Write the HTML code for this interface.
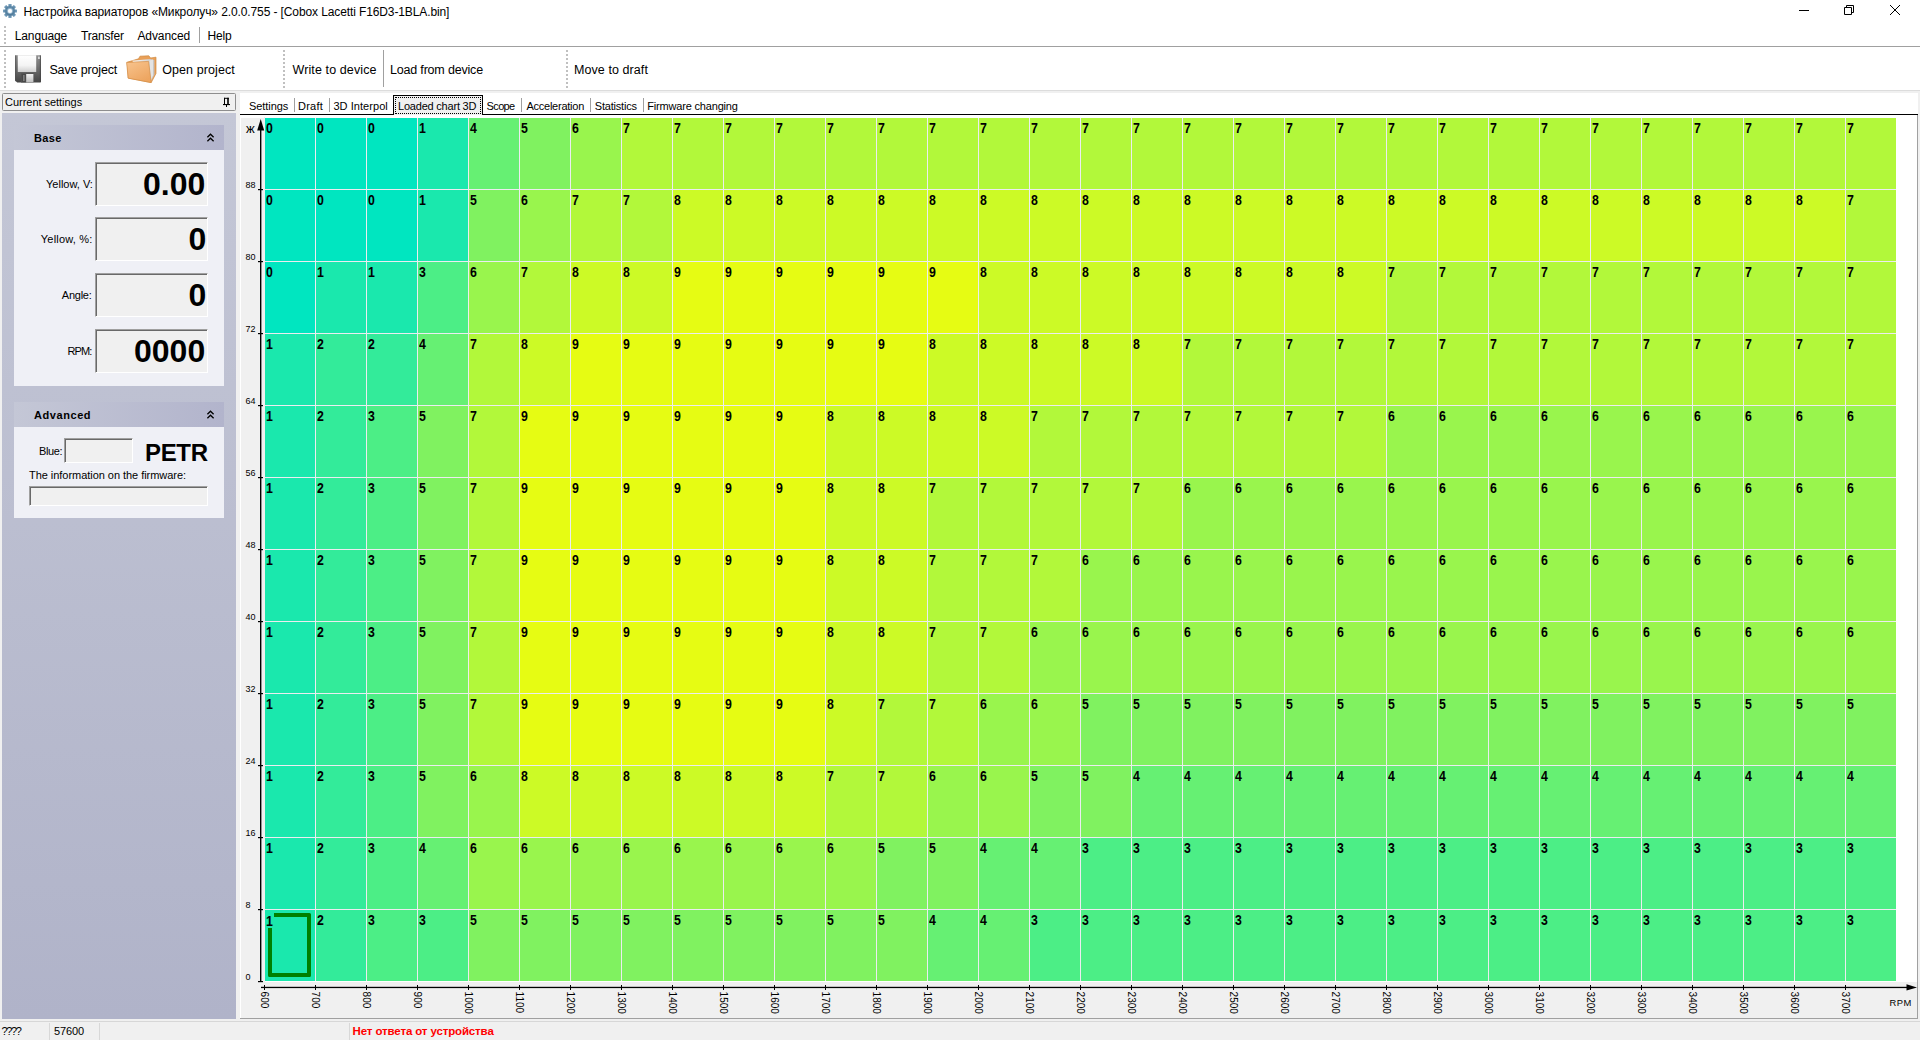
<!DOCTYPE html>
<html lang="ru"><head><meta charset="utf-8"><title>Настройка вариаторов «Микролуч»</title>
<style>
html,body{margin:0;padding:0}
body{width:1920px;height:1040px;overflow:hidden;position:relative;background:#f0f0f0;font-family:"Liberation Sans","DejaVu Sans",sans-serif;font-size:11px;color:#000}
.a{position:absolute}
.t{position:absolute;white-space:nowrap;line-height:1;transform-origin:0 0}
#title{left:0;top:0;width:1920px;height:23px;background:#fff}
#menu{left:0;top:23px;width:1920px;height:23px;background:#fff}
#tool{left:0;top:47px;width:1920px;height:43px;background:#fff}
.grip{position:absolute;width:2px;background:repeating-linear-gradient(to bottom,#c0c0c0 0,#c0c0c0 2px,transparent 2px,transparent 4px)}
.sep{position:absolute;width:1px;background:#a0a0a0}
.ui{font-size:12px}.tbf{font-size:12.5px}
.tab{font-size:11px}
#left{left:2px;top:113px;width:234px;height:906px;background:linear-gradient(to bottom,#c4c7d6,#b0b3c9)}
.hdr{position:absolute;width:210px;height:25px;background:linear-gradient(to right,#c4c7d6,#b2b4cc)}
.pane{position:absolute;width:210px;background:#eff0f6}
.box{position:absolute;box-sizing:border-box;background:#f0f0f0;border:1px solid;border-color:#a0a0a0 #fff #fff #a0a0a0;box-shadow:inset 1px 1px 0 #696969}
.big{position:absolute;font-weight:bold;white-space:nowrap;line-height:1;text-align:right}
.lbl{position:absolute;white-space:nowrap;line-height:1;font-size:11px;text-align:right}
#chart{left:240px;top:116px;width:1678px;height:903px}
.c{position:absolute;width:51px;height:72px}
.n{position:absolute;font-weight:bold;font-size:14px;line-height:1;transform:scaleX(.88);transform-origin:0 0;white-space:nowrap}
#status{left:0;top:1021px;width:1920px;height:19px;background:#f0f0f0}
.v0{background:#00e6c0}
.v1{background:#1ae8ad}
.v2{background:#33eb9a}
.v3{background:#4cee86}
.v4{background:#66f073}
.v5{background:#80f260}
.v6{background:#99f54d}
.v7{background:#b2f83a}
.v8{background:#ccfa26}
.v9{background:#e6fc13}
</style></head><body>
<div id="title" class="a"><svg class="a" style="left:3px;top:4px" width="14" height="14" viewBox="0 0 14 14"><defs><linearGradient id="gg" x1="0" y1="0" x2="0" y2="1"><stop offset="0" stop-color="#7aa3c0"/><stop offset="1" stop-color="#4d7898"/></linearGradient></defs><g fill="url(#gg)"><circle cx="7" cy="7" r="5.1"/><rect x="5.4" y="0" width="3.2" height="3.4" rx=".5" transform="rotate(0 7 7)"/><rect x="5.4" y="0" width="3.2" height="3.4" rx=".5" transform="rotate(45 7 7)"/><rect x="5.4" y="0" width="3.2" height="3.4" rx=".5" transform="rotate(90 7 7)"/><rect x="5.4" y="0" width="3.2" height="3.4" rx=".5" transform="rotate(135 7 7)"/><rect x="5.4" y="0" width="3.2" height="3.4" rx=".5" transform="rotate(180 7 7)"/><rect x="5.4" y="0" width="3.2" height="3.4" rx=".5" transform="rotate(225 7 7)"/><rect x="5.4" y="0" width="3.2" height="3.4" rx=".5" transform="rotate(270 7 7)"/><rect x="5.4" y="0" width="3.2" height="3.4" rx=".5" transform="rotate(315 7 7)"/></g><circle cx="7" cy="7" r="2.7" fill="#a9c4d8"/><circle cx="7" cy="7" r="2" fill="#fff"/></svg><span class="t ui" id="ttl" style="left:23.50px;top:6px;letter-spacing:-0.110px;">Настройка вариаторов «Микролуч» 2.0.0.755 - [Cobox Lacetti F16D3-1BLA.bin]</span><svg class="a" style="left:1790px;top:0" width="130" height="23" viewBox="0 0 130 23" fill="none" stroke="#000" stroke-width="1"><path d="M9 10.5H19"/><path d="M54.5 7.5h7v7h-7zM56.5 7.5v-2h7v7h-2"/><path d="M100 5l10 10M110 5l-10 10"/></svg></div>
<div id="menu" class="a"><div class="grip" style="left:4px;top:3px;height:20px"></div><span class="t ui" id="m0" style="left:14.80px;top:7px;letter-spacing:-0.143px;">Language</span><span class="t ui" id="m1" style="left:81.00px;top:7px;letter-spacing:-0.171px;">Transfer</span><span class="t ui" id="m2" style="left:137.40px;top:7px;letter-spacing:-0.086px;">Advanced</span><span class="t ui" id="m3" style="left:207.60px;top:7px;letter-spacing:-0.200px;">Help</span><div class="sep" style="left:199px;top:4px;height:16px"></div></div><div class="a" style="left:0;top:46px;width:1920px;height:1px;background:#a0a0a0"></div>
<div id="tool" class="a"><div class="grip" style="left:4px;top:3px;height:38px"></div><svg class="a" style="left:15px;top:8px" width="26" height="28" viewBox="0 0 26 28"><defs><linearGradient id="fg" x1="0" y1="0" x2="0" y2="1"><stop offset="0" stop-color="#909090"/><stop offset=".55" stop-color="#686868"/><stop offset="1" stop-color="#444"/></linearGradient><linearGradient id="fl" x1="0" y1="0" x2="0" y2="1"><stop offset="0" stop-color="#fff"/><stop offset=".6" stop-color="#f4f4f4"/><stop offset="1" stop-color="#cfcfcf"/></linearGradient><linearGradient id="fs" x1="0" y1="0" x2="0" y2="1"><stop offset="0" stop-color="#f2f2f2"/><stop offset="1" stop-color="#bdbdbd"/></linearGradient></defs><path d="M1 .2H25a1 1 0 0 1 1 1V26.5a1 1 0 0 1-1 1H2.2L0 25.5V1.2a1 1 0 0 1 1-1Z" fill="url(#fg)"/><rect x="0" y=".2" width="1.2" height="26" fill="#505050" opacity=".6"/><rect x="24.8" y=".2" width="1.2" height="27" fill="#404040" opacity=".6"/><rect x="2.8" y=".2" width="18.4" height="16.8" fill="url(#fl)"/><rect x="23" y="1.6" width="1.8" height="2.4" fill="#d8d8d8"/><rect x="6" y="18.4" width="12.4" height="9.1" fill="#505050"/><rect x="7.6" y="19.2" width="2.6" height="7.6" fill="#3a3a3a"/><rect x="8.3" y="19.8" width="1.2" height="6.4" fill="#9a9a9a"/><rect x="11.2" y="19" width="7.2" height="8.5" fill="url(#fs)"/></svg><span class="t tbf" id="tb0" style="left:49.40px;top:17px;letter-spacing:-0.145px;">Save project</span><svg class="a" style="left:126px;top:8px" width="31" height="28" viewBox="0 0 31 28"><defs><linearGradient id="fo" x1="0" y1="0" x2=".6" y2="1"><stop offset="0" stop-color="#f8c48e"/><stop offset="1" stop-color="#eda560"/></linearGradient><linearGradient id="fp" x1="0" y1="0" x2="1" y2="0"><stop offset="0" stop-color="#fff"/><stop offset="1" stop-color="#c4c4c4"/></linearGradient></defs><path d="M1.2 7.2L12.5 3.8L14 1.2L22.8 .8L24.6 3L30 2.2V18.5L25.2 27.6L2.2 23Z" fill="#e9a058" stroke="#cf8a42" stroke-width=".7" stroke-linejoin="round"/><path d="M6 5.8L24.2 4L28.4 5V19.5L25 26Z" fill="url(#fp)"/><path d="M23.4 5.5L27 4.6V20.5L24.8 25Z" fill="#e4e4e4"/><path d="M.6 7.4L22.6 6.4L25.2 27.6L2.2 23.2Z" fill="url(#fo)" stroke="#d58f47" stroke-width=".7" stroke-linejoin="round"/></svg><span class="t tbf" id="tb1" style="left:162.20px;top:17px;letter-spacing:0.091px;">Open project</span><div class="grip" style="left:283px;top:3px;height:38px"></div><span class="t tbf" id="tb2" style="left:292.50px;top:17px;letter-spacing:0.107px;">Write to device</span><div class="sep" style="left:383px;top:3px;height:37px"></div><span class="t tbf" id="tb3" style="left:390.00px;top:17px;letter-spacing:-0.187px;">Load from device</span><div class="grip" style="left:566px;top:3px;height:38px"></div><span class="t tbf" id="tb4" style="left:574.00px;top:17px;letter-spacing:0.075px;">Move to draft</span></div><div class="a" style="left:0;top:90px;width:1920px;height:1px;background:#dcdcdc"></div>
<div class="a" style="left:2px;top:93px;width:234px;height:18px;box-sizing:border-box;background:#f0f0f0;border:1px solid #8e8e8e;border-radius:1.5px"></div><span class="t " id="cs" style="left:5.10px;top:97px;letter-spacing:-0.040px;">Current settings</span><svg class="a" style="left:223px;top:97px" width="8" height="11" viewBox="0 0 8 11" fill="#000"><rect x="1" y=".8" width="1" height="6.4"/><rect x="1" y=".8" width="4.8" height="1"/><rect x="4.2" y=".8" width="1.6" height="6.4"/><rect x="0" y="7" width="7" height="1.1"/><rect x="3" y="8" width="1" height="2"/></svg>
<div id="left" class="a"></div><div class="hdr" style="left:14px;top:125px"></div><svg class="a" style="left:206px;top:133px" width="9" height="9" viewBox="0 0 9 9" fill="none" stroke="#000" stroke-width="1.3"><path d="M1.4 4.2L4.5 1.2L7.6 4.2M1.4 8.2L4.5 5.2L7.6 8.2"/></svg><span class="t " id="h0" style="left:34.00px;top:133px;letter-spacing:0.333px;font-weight:bold">Base</span><div class="pane" style="left:14px;top:150px;height:236px"></div><span class="t " id="l0" style="left:46.00px;top:179px;letter-spacing:0.000px;">Yellow, V:</span><div class="box" style="left:95px;top:162px;width:113px;height:44px"></div><span class="t " id="b0" style="left:143.00px;top:168px;letter-spacing:0.000px;font-weight:bold;font-size:32px">0.00</span><span class="t " id="l1" style="left:40.80px;top:234px;letter-spacing:0.200px;">Yellow, %:</span><div class="box" style="left:95px;top:217px;width:113px;height:44px"></div><span class="t " id="b1" style="left:188.60px;top:223px;letter-spacing:0.000px;font-weight:bold;font-size:32px">0</span><span class="t " id="l2" style="left:61.80px;top:290px;letter-spacing:-0.240px;">Angle:</span><div class="box" style="left:95px;top:273px;width:113px;height:44px"></div><span class="t " id="b2" style="left:188.60px;top:279px;letter-spacing:0.000px;font-weight:bold;font-size:32px">0</span><span class="t " id="l3" style="left:67.60px;top:346px;letter-spacing:-0.933px;">RPM:</span><div class="box" style="left:95px;top:329px;width:113px;height:44px"></div><span class="t " id="b3" style="left:134.00px;top:335px;letter-spacing:0.000px;font-weight:bold;font-size:32px">0000</span><div class="hdr" style="left:14px;top:402px"></div><svg class="a" style="left:206px;top:410px" width="9" height="9" viewBox="0 0 9 9" fill="none" stroke="#000" stroke-width="1.3"><path d="M1.4 4.2L4.5 1.2L7.6 4.2M1.4 8.2L4.5 5.2L7.6 8.2"/></svg><span class="t " id="h1" style="left:34.00px;top:410px;letter-spacing:0.571px;font-weight:bold">Advanced</span><div class="pane" style="left:14px;top:427px;height:91px"></div><span class="t " id="blue" style="left:39.00px;top:446px;letter-spacing:-0.400px;">Blue:</span><div class="box" style="left:64px;top:438px;width:69px;height:25px"></div><span class="t " id="petr" style="left:145.00px;top:441px;letter-spacing:-0.333px;font-weight:bold;font-size:24px">PETR</span><span class="t " id="fw" style="left:29.00px;top:470px;letter-spacing:-0.042px;">The information on the firmware:</span><div class="box" style="left:29px;top:486px;width:179px;height:20px"></div>
<div class="a" style="left:240px;top:93px;width:1678px;height:21px;background:#fff"></div><div class="a" style="left:240px;top:114px;width:1678px;height:1px;background:#000"></div><div class="a" style="left:393px;top:95px;width:90px;height:20px;box-sizing:border-box;background:#f0f0f0;border:1px solid #000;border-bottom:none"></div><div class="a" style="left:394px;top:114px;width:88px;height:4px;background:#f0f0f0"></div><div class="a" style="left:395px;top:97px;width:86px;height:17px;box-sizing:border-box;border:1px dotted #000"></div><span class="t tab" id="tt0" style="left:249.00px;top:101px;letter-spacing:-0.057px;">Settings</span><span class="t tab" id="tt1" style="left:298.00px;top:101px;letter-spacing:0.250px;">Draft</span><span class="t tab" id="tt2" style="left:333.40px;top:101px;letter-spacing:0.060px;">3D Interpol</span><span class="t tab" id="tt3" style="left:398.00px;top:101px;letter-spacing:-0.207px;">Loaded chart 3D</span><span class="t tab" id="tt4" style="left:486.60px;top:101px;letter-spacing:-0.650px;">Scope</span><span class="t tab" id="tt5" style="left:526.40px;top:101px;letter-spacing:-0.236px;">Acceleration</span><span class="t tab" id="tt6" style="left:594.80px;top:101px;letter-spacing:-0.200px;">Statistics</span><span class="t tab" id="tt7" style="left:647.20px;top:101px;letter-spacing:-0.175px;">Firmware changing</span><div class="sep" style="left:294px;top:98px;height:14px"></div><div class="sep" style="left:329px;top:98px;height:14px"></div><div class="sep" style="left:521px;top:98px;height:14px"></div><div class="sep" style="left:590px;top:98px;height:14px"></div><div class="sep" style="left:643px;top:98px;height:14px"></div>
<div id="chart" class="a"><div class="a" style="left:0;top:-1px;width:1677px;height:903px;background:#fff"></div><div class="a" style="left:1px;top:2px;width:1676px;height:900px;background:#f0f0f0"></div><div class="a" style="left:25px;top:2px;width:1652px;height:864px;background:#fff"></div><div class="a" style="left:1677px;top:-1px;width:1px;height:904px;background:#a0a0a0"></div><div class="a" style="left:0;top:902px;width:1678px;height:1px;background:#a0a0a0"></div><div class="a" id="cells" style="left:24px;top:1px;width:1632px;height:864px"><div class="c v0" style="left:0px;top:0px"><span class="n" style="left:2.3px;top:4px">0</span></div><div class="c v0" style="left:51px;top:0px"><span class="n" style="left:2.3px;top:4px">0</span></div><div class="c v0" style="left:102px;top:0px"><span class="n" style="left:2.3px;top:4px">0</span></div><div class="c v1" style="left:153px;top:0px"><span class="n" style="left:2.3px;top:4px">1</span></div><div class="c v4" style="left:204px;top:0px"><span class="n" style="left:2.3px;top:4px">4</span></div><div class="c v5" style="left:255px;top:0px"><span class="n" style="left:2.3px;top:4px">5</span></div><div class="c v6" style="left:306px;top:0px"><span class="n" style="left:2.3px;top:4px">6</span></div><div class="c v7" style="left:357px;top:0px"><span class="n" style="left:2.3px;top:4px">7</span></div><div class="c v7" style="left:408px;top:0px"><span class="n" style="left:2.3px;top:4px">7</span></div><div class="c v7" style="left:459px;top:0px"><span class="n" style="left:2.3px;top:4px">7</span></div><div class="c v7" style="left:510px;top:0px"><span class="n" style="left:2.3px;top:4px">7</span></div><div class="c v7" style="left:561px;top:0px"><span class="n" style="left:2.3px;top:4px">7</span></div><div class="c v7" style="left:612px;top:0px"><span class="n" style="left:2.3px;top:4px">7</span></div><div class="c v7" style="left:663px;top:0px"><span class="n" style="left:2.3px;top:4px">7</span></div><div class="c v7" style="left:714px;top:0px"><span class="n" style="left:2.3px;top:4px">7</span></div><div class="c v7" style="left:765px;top:0px"><span class="n" style="left:2.3px;top:4px">7</span></div><div class="c v7" style="left:816px;top:0px"><span class="n" style="left:2.3px;top:4px">7</span></div><div class="c v7" style="left:867px;top:0px"><span class="n" style="left:2.3px;top:4px">7</span></div><div class="c v7" style="left:918px;top:0px"><span class="n" style="left:2.3px;top:4px">7</span></div><div class="c v7" style="left:969px;top:0px"><span class="n" style="left:2.3px;top:4px">7</span></div><div class="c v7" style="left:1020px;top:0px"><span class="n" style="left:2.3px;top:4px">7</span></div><div class="c v7" style="left:1071px;top:0px"><span class="n" style="left:2.3px;top:4px">7</span></div><div class="c v7" style="left:1122px;top:0px"><span class="n" style="left:2.3px;top:4px">7</span></div><div class="c v7" style="left:1173px;top:0px"><span class="n" style="left:2.3px;top:4px">7</span></div><div class="c v7" style="left:1224px;top:0px"><span class="n" style="left:2.3px;top:4px">7</span></div><div class="c v7" style="left:1275px;top:0px"><span class="n" style="left:2.3px;top:4px">7</span></div><div class="c v7" style="left:1326px;top:0px"><span class="n" style="left:2.3px;top:4px">7</span></div><div class="c v7" style="left:1377px;top:0px"><span class="n" style="left:2.3px;top:4px">7</span></div><div class="c v7" style="left:1428px;top:0px"><span class="n" style="left:2.3px;top:4px">7</span></div><div class="c v7" style="left:1479px;top:0px"><span class="n" style="left:2.3px;top:4px">7</span></div><div class="c v7" style="left:1530px;top:0px"><span class="n" style="left:2.3px;top:4px">7</span></div><div class="c v7" style="left:1581px;top:0px"><span class="n" style="left:2.3px;top:4px">7</span></div>
<div class="c v0" style="left:0px;top:72px"><span class="n" style="left:2.3px;top:4px">0</span></div><div class="c v0" style="left:51px;top:72px"><span class="n" style="left:2.3px;top:4px">0</span></div><div class="c v0" style="left:102px;top:72px"><span class="n" style="left:2.3px;top:4px">0</span></div><div class="c v1" style="left:153px;top:72px"><span class="n" style="left:2.3px;top:4px">1</span></div><div class="c v5" style="left:204px;top:72px"><span class="n" style="left:2.3px;top:4px">5</span></div><div class="c v6" style="left:255px;top:72px"><span class="n" style="left:2.3px;top:4px">6</span></div><div class="c v7" style="left:306px;top:72px"><span class="n" style="left:2.3px;top:4px">7</span></div><div class="c v7" style="left:357px;top:72px"><span class="n" style="left:2.3px;top:4px">7</span></div><div class="c v8" style="left:408px;top:72px"><span class="n" style="left:2.3px;top:4px">8</span></div><div class="c v8" style="left:459px;top:72px"><span class="n" style="left:2.3px;top:4px">8</span></div><div class="c v8" style="left:510px;top:72px"><span class="n" style="left:2.3px;top:4px">8</span></div><div class="c v8" style="left:561px;top:72px"><span class="n" style="left:2.3px;top:4px">8</span></div><div class="c v8" style="left:612px;top:72px"><span class="n" style="left:2.3px;top:4px">8</span></div><div class="c v8" style="left:663px;top:72px"><span class="n" style="left:2.3px;top:4px">8</span></div><div class="c v8" style="left:714px;top:72px"><span class="n" style="left:2.3px;top:4px">8</span></div><div class="c v8" style="left:765px;top:72px"><span class="n" style="left:2.3px;top:4px">8</span></div><div class="c v8" style="left:816px;top:72px"><span class="n" style="left:2.3px;top:4px">8</span></div><div class="c v8" style="left:867px;top:72px"><span class="n" style="left:2.3px;top:4px">8</span></div><div class="c v8" style="left:918px;top:72px"><span class="n" style="left:2.3px;top:4px">8</span></div><div class="c v8" style="left:969px;top:72px"><span class="n" style="left:2.3px;top:4px">8</span></div><div class="c v8" style="left:1020px;top:72px"><span class="n" style="left:2.3px;top:4px">8</span></div><div class="c v8" style="left:1071px;top:72px"><span class="n" style="left:2.3px;top:4px">8</span></div><div class="c v8" style="left:1122px;top:72px"><span class="n" style="left:2.3px;top:4px">8</span></div><div class="c v8" style="left:1173px;top:72px"><span class="n" style="left:2.3px;top:4px">8</span></div><div class="c v8" style="left:1224px;top:72px"><span class="n" style="left:2.3px;top:4px">8</span></div><div class="c v8" style="left:1275px;top:72px"><span class="n" style="left:2.3px;top:4px">8</span></div><div class="c v8" style="left:1326px;top:72px"><span class="n" style="left:2.3px;top:4px">8</span></div><div class="c v8" style="left:1377px;top:72px"><span class="n" style="left:2.3px;top:4px">8</span></div><div class="c v8" style="left:1428px;top:72px"><span class="n" style="left:2.3px;top:4px">8</span></div><div class="c v8" style="left:1479px;top:72px"><span class="n" style="left:2.3px;top:4px">8</span></div><div class="c v8" style="left:1530px;top:72px"><span class="n" style="left:2.3px;top:4px">8</span></div><div class="c v7" style="left:1581px;top:72px"><span class="n" style="left:2.3px;top:4px">7</span></div>
<div class="c v0" style="left:0px;top:144px"><span class="n" style="left:2.3px;top:4px">0</span></div><div class="c v1" style="left:51px;top:144px"><span class="n" style="left:2.3px;top:4px">1</span></div><div class="c v1" style="left:102px;top:144px"><span class="n" style="left:2.3px;top:4px">1</span></div><div class="c v3" style="left:153px;top:144px"><span class="n" style="left:2.3px;top:4px">3</span></div><div class="c v6" style="left:204px;top:144px"><span class="n" style="left:2.3px;top:4px">6</span></div><div class="c v7" style="left:255px;top:144px"><span class="n" style="left:2.3px;top:4px">7</span></div><div class="c v8" style="left:306px;top:144px"><span class="n" style="left:2.3px;top:4px">8</span></div><div class="c v8" style="left:357px;top:144px"><span class="n" style="left:2.3px;top:4px">8</span></div><div class="c v9" style="left:408px;top:144px"><span class="n" style="left:2.3px;top:4px">9</span></div><div class="c v9" style="left:459px;top:144px"><span class="n" style="left:2.3px;top:4px">9</span></div><div class="c v9" style="left:510px;top:144px"><span class="n" style="left:2.3px;top:4px">9</span></div><div class="c v9" style="left:561px;top:144px"><span class="n" style="left:2.3px;top:4px">9</span></div><div class="c v9" style="left:612px;top:144px"><span class="n" style="left:2.3px;top:4px">9</span></div><div class="c v9" style="left:663px;top:144px"><span class="n" style="left:2.3px;top:4px">9</span></div><div class="c v8" style="left:714px;top:144px"><span class="n" style="left:2.3px;top:4px">8</span></div><div class="c v8" style="left:765px;top:144px"><span class="n" style="left:2.3px;top:4px">8</span></div><div class="c v8" style="left:816px;top:144px"><span class="n" style="left:2.3px;top:4px">8</span></div><div class="c v8" style="left:867px;top:144px"><span class="n" style="left:2.3px;top:4px">8</span></div><div class="c v8" style="left:918px;top:144px"><span class="n" style="left:2.3px;top:4px">8</span></div><div class="c v8" style="left:969px;top:144px"><span class="n" style="left:2.3px;top:4px">8</span></div><div class="c v8" style="left:1020px;top:144px"><span class="n" style="left:2.3px;top:4px">8</span></div><div class="c v8" style="left:1071px;top:144px"><span class="n" style="left:2.3px;top:4px">8</span></div><div class="c v7" style="left:1122px;top:144px"><span class="n" style="left:2.3px;top:4px">7</span></div><div class="c v7" style="left:1173px;top:144px"><span class="n" style="left:2.3px;top:4px">7</span></div><div class="c v7" style="left:1224px;top:144px"><span class="n" style="left:2.3px;top:4px">7</span></div><div class="c v7" style="left:1275px;top:144px"><span class="n" style="left:2.3px;top:4px">7</span></div><div class="c v7" style="left:1326px;top:144px"><span class="n" style="left:2.3px;top:4px">7</span></div><div class="c v7" style="left:1377px;top:144px"><span class="n" style="left:2.3px;top:4px">7</span></div><div class="c v7" style="left:1428px;top:144px"><span class="n" style="left:2.3px;top:4px">7</span></div><div class="c v7" style="left:1479px;top:144px"><span class="n" style="left:2.3px;top:4px">7</span></div><div class="c v7" style="left:1530px;top:144px"><span class="n" style="left:2.3px;top:4px">7</span></div><div class="c v7" style="left:1581px;top:144px"><span class="n" style="left:2.3px;top:4px">7</span></div>
<div class="c v1" style="left:0px;top:216px"><span class="n" style="left:2.3px;top:4px">1</span></div><div class="c v2" style="left:51px;top:216px"><span class="n" style="left:2.3px;top:4px">2</span></div><div class="c v2" style="left:102px;top:216px"><span class="n" style="left:2.3px;top:4px">2</span></div><div class="c v4" style="left:153px;top:216px"><span class="n" style="left:2.3px;top:4px">4</span></div><div class="c v7" style="left:204px;top:216px"><span class="n" style="left:2.3px;top:4px">7</span></div><div class="c v8" style="left:255px;top:216px"><span class="n" style="left:2.3px;top:4px">8</span></div><div class="c v9" style="left:306px;top:216px"><span class="n" style="left:2.3px;top:4px">9</span></div><div class="c v9" style="left:357px;top:216px"><span class="n" style="left:2.3px;top:4px">9</span></div><div class="c v9" style="left:408px;top:216px"><span class="n" style="left:2.3px;top:4px">9</span></div><div class="c v9" style="left:459px;top:216px"><span class="n" style="left:2.3px;top:4px">9</span></div><div class="c v9" style="left:510px;top:216px"><span class="n" style="left:2.3px;top:4px">9</span></div><div class="c v9" style="left:561px;top:216px"><span class="n" style="left:2.3px;top:4px">9</span></div><div class="c v9" style="left:612px;top:216px"><span class="n" style="left:2.3px;top:4px">9</span></div><div class="c v8" style="left:663px;top:216px"><span class="n" style="left:2.3px;top:4px">8</span></div><div class="c v8" style="left:714px;top:216px"><span class="n" style="left:2.3px;top:4px">8</span></div><div class="c v8" style="left:765px;top:216px"><span class="n" style="left:2.3px;top:4px">8</span></div><div class="c v8" style="left:816px;top:216px"><span class="n" style="left:2.3px;top:4px">8</span></div><div class="c v8" style="left:867px;top:216px"><span class="n" style="left:2.3px;top:4px">8</span></div><div class="c v7" style="left:918px;top:216px"><span class="n" style="left:2.3px;top:4px">7</span></div><div class="c v7" style="left:969px;top:216px"><span class="n" style="left:2.3px;top:4px">7</span></div><div class="c v7" style="left:1020px;top:216px"><span class="n" style="left:2.3px;top:4px">7</span></div><div class="c v7" style="left:1071px;top:216px"><span class="n" style="left:2.3px;top:4px">7</span></div><div class="c v7" style="left:1122px;top:216px"><span class="n" style="left:2.3px;top:4px">7</span></div><div class="c v7" style="left:1173px;top:216px"><span class="n" style="left:2.3px;top:4px">7</span></div><div class="c v7" style="left:1224px;top:216px"><span class="n" style="left:2.3px;top:4px">7</span></div><div class="c v7" style="left:1275px;top:216px"><span class="n" style="left:2.3px;top:4px">7</span></div><div class="c v7" style="left:1326px;top:216px"><span class="n" style="left:2.3px;top:4px">7</span></div><div class="c v7" style="left:1377px;top:216px"><span class="n" style="left:2.3px;top:4px">7</span></div><div class="c v7" style="left:1428px;top:216px"><span class="n" style="left:2.3px;top:4px">7</span></div><div class="c v7" style="left:1479px;top:216px"><span class="n" style="left:2.3px;top:4px">7</span></div><div class="c v7" style="left:1530px;top:216px"><span class="n" style="left:2.3px;top:4px">7</span></div><div class="c v7" style="left:1581px;top:216px"><span class="n" style="left:2.3px;top:4px">7</span></div>
<div class="c v1" style="left:0px;top:288px"><span class="n" style="left:2.3px;top:4px">1</span></div><div class="c v2" style="left:51px;top:288px"><span class="n" style="left:2.3px;top:4px">2</span></div><div class="c v3" style="left:102px;top:288px"><span class="n" style="left:2.3px;top:4px">3</span></div><div class="c v5" style="left:153px;top:288px"><span class="n" style="left:2.3px;top:4px">5</span></div><div class="c v7" style="left:204px;top:288px"><span class="n" style="left:2.3px;top:4px">7</span></div><div class="c v9" style="left:255px;top:288px"><span class="n" style="left:2.3px;top:4px">9</span></div><div class="c v9" style="left:306px;top:288px"><span class="n" style="left:2.3px;top:4px">9</span></div><div class="c v9" style="left:357px;top:288px"><span class="n" style="left:2.3px;top:4px">9</span></div><div class="c v9" style="left:408px;top:288px"><span class="n" style="left:2.3px;top:4px">9</span></div><div class="c v9" style="left:459px;top:288px"><span class="n" style="left:2.3px;top:4px">9</span></div><div class="c v9" style="left:510px;top:288px"><span class="n" style="left:2.3px;top:4px">9</span></div><div class="c v8" style="left:561px;top:288px"><span class="n" style="left:2.3px;top:4px">8</span></div><div class="c v8" style="left:612px;top:288px"><span class="n" style="left:2.3px;top:4px">8</span></div><div class="c v8" style="left:663px;top:288px"><span class="n" style="left:2.3px;top:4px">8</span></div><div class="c v8" style="left:714px;top:288px"><span class="n" style="left:2.3px;top:4px">8</span></div><div class="c v7" style="left:765px;top:288px"><span class="n" style="left:2.3px;top:4px">7</span></div><div class="c v7" style="left:816px;top:288px"><span class="n" style="left:2.3px;top:4px">7</span></div><div class="c v7" style="left:867px;top:288px"><span class="n" style="left:2.3px;top:4px">7</span></div><div class="c v7" style="left:918px;top:288px"><span class="n" style="left:2.3px;top:4px">7</span></div><div class="c v7" style="left:969px;top:288px"><span class="n" style="left:2.3px;top:4px">7</span></div><div class="c v7" style="left:1020px;top:288px"><span class="n" style="left:2.3px;top:4px">7</span></div><div class="c v7" style="left:1071px;top:288px"><span class="n" style="left:2.3px;top:4px">7</span></div><div class="c v6" style="left:1122px;top:288px"><span class="n" style="left:2.3px;top:4px">6</span></div><div class="c v6" style="left:1173px;top:288px"><span class="n" style="left:2.3px;top:4px">6</span></div><div class="c v6" style="left:1224px;top:288px"><span class="n" style="left:2.3px;top:4px">6</span></div><div class="c v6" style="left:1275px;top:288px"><span class="n" style="left:2.3px;top:4px">6</span></div><div class="c v6" style="left:1326px;top:288px"><span class="n" style="left:2.3px;top:4px">6</span></div><div class="c v6" style="left:1377px;top:288px"><span class="n" style="left:2.3px;top:4px">6</span></div><div class="c v6" style="left:1428px;top:288px"><span class="n" style="left:2.3px;top:4px">6</span></div><div class="c v6" style="left:1479px;top:288px"><span class="n" style="left:2.3px;top:4px">6</span></div><div class="c v6" style="left:1530px;top:288px"><span class="n" style="left:2.3px;top:4px">6</span></div><div class="c v6" style="left:1581px;top:288px"><span class="n" style="left:2.3px;top:4px">6</span></div>
<div class="c v1" style="left:0px;top:360px"><span class="n" style="left:2.3px;top:4px">1</span></div><div class="c v2" style="left:51px;top:360px"><span class="n" style="left:2.3px;top:4px">2</span></div><div class="c v3" style="left:102px;top:360px"><span class="n" style="left:2.3px;top:4px">3</span></div><div class="c v5" style="left:153px;top:360px"><span class="n" style="left:2.3px;top:4px">5</span></div><div class="c v7" style="left:204px;top:360px"><span class="n" style="left:2.3px;top:4px">7</span></div><div class="c v9" style="left:255px;top:360px"><span class="n" style="left:2.3px;top:4px">9</span></div><div class="c v9" style="left:306px;top:360px"><span class="n" style="left:2.3px;top:4px">9</span></div><div class="c v9" style="left:357px;top:360px"><span class="n" style="left:2.3px;top:4px">9</span></div><div class="c v9" style="left:408px;top:360px"><span class="n" style="left:2.3px;top:4px">9</span></div><div class="c v9" style="left:459px;top:360px"><span class="n" style="left:2.3px;top:4px">9</span></div><div class="c v9" style="left:510px;top:360px"><span class="n" style="left:2.3px;top:4px">9</span></div><div class="c v8" style="left:561px;top:360px"><span class="n" style="left:2.3px;top:4px">8</span></div><div class="c v8" style="left:612px;top:360px"><span class="n" style="left:2.3px;top:4px">8</span></div><div class="c v7" style="left:663px;top:360px"><span class="n" style="left:2.3px;top:4px">7</span></div><div class="c v7" style="left:714px;top:360px"><span class="n" style="left:2.3px;top:4px">7</span></div><div class="c v7" style="left:765px;top:360px"><span class="n" style="left:2.3px;top:4px">7</span></div><div class="c v7" style="left:816px;top:360px"><span class="n" style="left:2.3px;top:4px">7</span></div><div class="c v7" style="left:867px;top:360px"><span class="n" style="left:2.3px;top:4px">7</span></div><div class="c v6" style="left:918px;top:360px"><span class="n" style="left:2.3px;top:4px">6</span></div><div class="c v6" style="left:969px;top:360px"><span class="n" style="left:2.3px;top:4px">6</span></div><div class="c v6" style="left:1020px;top:360px"><span class="n" style="left:2.3px;top:4px">6</span></div><div class="c v6" style="left:1071px;top:360px"><span class="n" style="left:2.3px;top:4px">6</span></div><div class="c v6" style="left:1122px;top:360px"><span class="n" style="left:2.3px;top:4px">6</span></div><div class="c v6" style="left:1173px;top:360px"><span class="n" style="left:2.3px;top:4px">6</span></div><div class="c v6" style="left:1224px;top:360px"><span class="n" style="left:2.3px;top:4px">6</span></div><div class="c v6" style="left:1275px;top:360px"><span class="n" style="left:2.3px;top:4px">6</span></div><div class="c v6" style="left:1326px;top:360px"><span class="n" style="left:2.3px;top:4px">6</span></div><div class="c v6" style="left:1377px;top:360px"><span class="n" style="left:2.3px;top:4px">6</span></div><div class="c v6" style="left:1428px;top:360px"><span class="n" style="left:2.3px;top:4px">6</span></div><div class="c v6" style="left:1479px;top:360px"><span class="n" style="left:2.3px;top:4px">6</span></div><div class="c v6" style="left:1530px;top:360px"><span class="n" style="left:2.3px;top:4px">6</span></div><div class="c v6" style="left:1581px;top:360px"><span class="n" style="left:2.3px;top:4px">6</span></div>
<div class="c v1" style="left:0px;top:432px"><span class="n" style="left:2.3px;top:4px">1</span></div><div class="c v2" style="left:51px;top:432px"><span class="n" style="left:2.3px;top:4px">2</span></div><div class="c v3" style="left:102px;top:432px"><span class="n" style="left:2.3px;top:4px">3</span></div><div class="c v5" style="left:153px;top:432px"><span class="n" style="left:2.3px;top:4px">5</span></div><div class="c v7" style="left:204px;top:432px"><span class="n" style="left:2.3px;top:4px">7</span></div><div class="c v9" style="left:255px;top:432px"><span class="n" style="left:2.3px;top:4px">9</span></div><div class="c v9" style="left:306px;top:432px"><span class="n" style="left:2.3px;top:4px">9</span></div><div class="c v9" style="left:357px;top:432px"><span class="n" style="left:2.3px;top:4px">9</span></div><div class="c v9" style="left:408px;top:432px"><span class="n" style="left:2.3px;top:4px">9</span></div><div class="c v9" style="left:459px;top:432px"><span class="n" style="left:2.3px;top:4px">9</span></div><div class="c v9" style="left:510px;top:432px"><span class="n" style="left:2.3px;top:4px">9</span></div><div class="c v8" style="left:561px;top:432px"><span class="n" style="left:2.3px;top:4px">8</span></div><div class="c v8" style="left:612px;top:432px"><span class="n" style="left:2.3px;top:4px">8</span></div><div class="c v7" style="left:663px;top:432px"><span class="n" style="left:2.3px;top:4px">7</span></div><div class="c v7" style="left:714px;top:432px"><span class="n" style="left:2.3px;top:4px">7</span></div><div class="c v7" style="left:765px;top:432px"><span class="n" style="left:2.3px;top:4px">7</span></div><div class="c v6" style="left:816px;top:432px"><span class="n" style="left:2.3px;top:4px">6</span></div><div class="c v6" style="left:867px;top:432px"><span class="n" style="left:2.3px;top:4px">6</span></div><div class="c v6" style="left:918px;top:432px"><span class="n" style="left:2.3px;top:4px">6</span></div><div class="c v6" style="left:969px;top:432px"><span class="n" style="left:2.3px;top:4px">6</span></div><div class="c v6" style="left:1020px;top:432px"><span class="n" style="left:2.3px;top:4px">6</span></div><div class="c v6" style="left:1071px;top:432px"><span class="n" style="left:2.3px;top:4px">6</span></div><div class="c v6" style="left:1122px;top:432px"><span class="n" style="left:2.3px;top:4px">6</span></div><div class="c v6" style="left:1173px;top:432px"><span class="n" style="left:2.3px;top:4px">6</span></div><div class="c v6" style="left:1224px;top:432px"><span class="n" style="left:2.3px;top:4px">6</span></div><div class="c v6" style="left:1275px;top:432px"><span class="n" style="left:2.3px;top:4px">6</span></div><div class="c v6" style="left:1326px;top:432px"><span class="n" style="left:2.3px;top:4px">6</span></div><div class="c v6" style="left:1377px;top:432px"><span class="n" style="left:2.3px;top:4px">6</span></div><div class="c v6" style="left:1428px;top:432px"><span class="n" style="left:2.3px;top:4px">6</span></div><div class="c v6" style="left:1479px;top:432px"><span class="n" style="left:2.3px;top:4px">6</span></div><div class="c v6" style="left:1530px;top:432px"><span class="n" style="left:2.3px;top:4px">6</span></div><div class="c v6" style="left:1581px;top:432px"><span class="n" style="left:2.3px;top:4px">6</span></div>
<div class="c v1" style="left:0px;top:504px"><span class="n" style="left:2.3px;top:4px">1</span></div><div class="c v2" style="left:51px;top:504px"><span class="n" style="left:2.3px;top:4px">2</span></div><div class="c v3" style="left:102px;top:504px"><span class="n" style="left:2.3px;top:4px">3</span></div><div class="c v5" style="left:153px;top:504px"><span class="n" style="left:2.3px;top:4px">5</span></div><div class="c v7" style="left:204px;top:504px"><span class="n" style="left:2.3px;top:4px">7</span></div><div class="c v9" style="left:255px;top:504px"><span class="n" style="left:2.3px;top:4px">9</span></div><div class="c v9" style="left:306px;top:504px"><span class="n" style="left:2.3px;top:4px">9</span></div><div class="c v9" style="left:357px;top:504px"><span class="n" style="left:2.3px;top:4px">9</span></div><div class="c v9" style="left:408px;top:504px"><span class="n" style="left:2.3px;top:4px">9</span></div><div class="c v9" style="left:459px;top:504px"><span class="n" style="left:2.3px;top:4px">9</span></div><div class="c v9" style="left:510px;top:504px"><span class="n" style="left:2.3px;top:4px">9</span></div><div class="c v8" style="left:561px;top:504px"><span class="n" style="left:2.3px;top:4px">8</span></div><div class="c v8" style="left:612px;top:504px"><span class="n" style="left:2.3px;top:4px">8</span></div><div class="c v7" style="left:663px;top:504px"><span class="n" style="left:2.3px;top:4px">7</span></div><div class="c v7" style="left:714px;top:504px"><span class="n" style="left:2.3px;top:4px">7</span></div><div class="c v6" style="left:765px;top:504px"><span class="n" style="left:2.3px;top:4px">6</span></div><div class="c v6" style="left:816px;top:504px"><span class="n" style="left:2.3px;top:4px">6</span></div><div class="c v6" style="left:867px;top:504px"><span class="n" style="left:2.3px;top:4px">6</span></div><div class="c v6" style="left:918px;top:504px"><span class="n" style="left:2.3px;top:4px">6</span></div><div class="c v6" style="left:969px;top:504px"><span class="n" style="left:2.3px;top:4px">6</span></div><div class="c v6" style="left:1020px;top:504px"><span class="n" style="left:2.3px;top:4px">6</span></div><div class="c v6" style="left:1071px;top:504px"><span class="n" style="left:2.3px;top:4px">6</span></div><div class="c v6" style="left:1122px;top:504px"><span class="n" style="left:2.3px;top:4px">6</span></div><div class="c v6" style="left:1173px;top:504px"><span class="n" style="left:2.3px;top:4px">6</span></div><div class="c v6" style="left:1224px;top:504px"><span class="n" style="left:2.3px;top:4px">6</span></div><div class="c v6" style="left:1275px;top:504px"><span class="n" style="left:2.3px;top:4px">6</span></div><div class="c v6" style="left:1326px;top:504px"><span class="n" style="left:2.3px;top:4px">6</span></div><div class="c v6" style="left:1377px;top:504px"><span class="n" style="left:2.3px;top:4px">6</span></div><div class="c v6" style="left:1428px;top:504px"><span class="n" style="left:2.3px;top:4px">6</span></div><div class="c v6" style="left:1479px;top:504px"><span class="n" style="left:2.3px;top:4px">6</span></div><div class="c v6" style="left:1530px;top:504px"><span class="n" style="left:2.3px;top:4px">6</span></div><div class="c v6" style="left:1581px;top:504px"><span class="n" style="left:2.3px;top:4px">6</span></div>
<div class="c v1" style="left:0px;top:576px"><span class="n" style="left:2.3px;top:4px">1</span></div><div class="c v2" style="left:51px;top:576px"><span class="n" style="left:2.3px;top:4px">2</span></div><div class="c v3" style="left:102px;top:576px"><span class="n" style="left:2.3px;top:4px">3</span></div><div class="c v5" style="left:153px;top:576px"><span class="n" style="left:2.3px;top:4px">5</span></div><div class="c v7" style="left:204px;top:576px"><span class="n" style="left:2.3px;top:4px">7</span></div><div class="c v9" style="left:255px;top:576px"><span class="n" style="left:2.3px;top:4px">9</span></div><div class="c v9" style="left:306px;top:576px"><span class="n" style="left:2.3px;top:4px">9</span></div><div class="c v9" style="left:357px;top:576px"><span class="n" style="left:2.3px;top:4px">9</span></div><div class="c v9" style="left:408px;top:576px"><span class="n" style="left:2.3px;top:4px">9</span></div><div class="c v9" style="left:459px;top:576px"><span class="n" style="left:2.3px;top:4px">9</span></div><div class="c v9" style="left:510px;top:576px"><span class="n" style="left:2.3px;top:4px">9</span></div><div class="c v8" style="left:561px;top:576px"><span class="n" style="left:2.3px;top:4px">8</span></div><div class="c v7" style="left:612px;top:576px"><span class="n" style="left:2.3px;top:4px">7</span></div><div class="c v7" style="left:663px;top:576px"><span class="n" style="left:2.3px;top:4px">7</span></div><div class="c v6" style="left:714px;top:576px"><span class="n" style="left:2.3px;top:4px">6</span></div><div class="c v6" style="left:765px;top:576px"><span class="n" style="left:2.3px;top:4px">6</span></div><div class="c v5" style="left:816px;top:576px"><span class="n" style="left:2.3px;top:4px">5</span></div><div class="c v5" style="left:867px;top:576px"><span class="n" style="left:2.3px;top:4px">5</span></div><div class="c v5" style="left:918px;top:576px"><span class="n" style="left:2.3px;top:4px">5</span></div><div class="c v5" style="left:969px;top:576px"><span class="n" style="left:2.3px;top:4px">5</span></div><div class="c v5" style="left:1020px;top:576px"><span class="n" style="left:2.3px;top:4px">5</span></div><div class="c v5" style="left:1071px;top:576px"><span class="n" style="left:2.3px;top:4px">5</span></div><div class="c v5" style="left:1122px;top:576px"><span class="n" style="left:2.3px;top:4px">5</span></div><div class="c v5" style="left:1173px;top:576px"><span class="n" style="left:2.3px;top:4px">5</span></div><div class="c v5" style="left:1224px;top:576px"><span class="n" style="left:2.3px;top:4px">5</span></div><div class="c v5" style="left:1275px;top:576px"><span class="n" style="left:2.3px;top:4px">5</span></div><div class="c v5" style="left:1326px;top:576px"><span class="n" style="left:2.3px;top:4px">5</span></div><div class="c v5" style="left:1377px;top:576px"><span class="n" style="left:2.3px;top:4px">5</span></div><div class="c v5" style="left:1428px;top:576px"><span class="n" style="left:2.3px;top:4px">5</span></div><div class="c v5" style="left:1479px;top:576px"><span class="n" style="left:2.3px;top:4px">5</span></div><div class="c v5" style="left:1530px;top:576px"><span class="n" style="left:2.3px;top:4px">5</span></div><div class="c v5" style="left:1581px;top:576px"><span class="n" style="left:2.3px;top:4px">5</span></div>
<div class="c v1" style="left:0px;top:648px"><span class="n" style="left:2.3px;top:4px">1</span></div><div class="c v2" style="left:51px;top:648px"><span class="n" style="left:2.3px;top:4px">2</span></div><div class="c v3" style="left:102px;top:648px"><span class="n" style="left:2.3px;top:4px">3</span></div><div class="c v5" style="left:153px;top:648px"><span class="n" style="left:2.3px;top:4px">5</span></div><div class="c v6" style="left:204px;top:648px"><span class="n" style="left:2.3px;top:4px">6</span></div><div class="c v8" style="left:255px;top:648px"><span class="n" style="left:2.3px;top:4px">8</span></div><div class="c v8" style="left:306px;top:648px"><span class="n" style="left:2.3px;top:4px">8</span></div><div class="c v8" style="left:357px;top:648px"><span class="n" style="left:2.3px;top:4px">8</span></div><div class="c v8" style="left:408px;top:648px"><span class="n" style="left:2.3px;top:4px">8</span></div><div class="c v8" style="left:459px;top:648px"><span class="n" style="left:2.3px;top:4px">8</span></div><div class="c v8" style="left:510px;top:648px"><span class="n" style="left:2.3px;top:4px">8</span></div><div class="c v7" style="left:561px;top:648px"><span class="n" style="left:2.3px;top:4px">7</span></div><div class="c v7" style="left:612px;top:648px"><span class="n" style="left:2.3px;top:4px">7</span></div><div class="c v6" style="left:663px;top:648px"><span class="n" style="left:2.3px;top:4px">6</span></div><div class="c v6" style="left:714px;top:648px"><span class="n" style="left:2.3px;top:4px">6</span></div><div class="c v5" style="left:765px;top:648px"><span class="n" style="left:2.3px;top:4px">5</span></div><div class="c v5" style="left:816px;top:648px"><span class="n" style="left:2.3px;top:4px">5</span></div><div class="c v4" style="left:867px;top:648px"><span class="n" style="left:2.3px;top:4px">4</span></div><div class="c v4" style="left:918px;top:648px"><span class="n" style="left:2.3px;top:4px">4</span></div><div class="c v4" style="left:969px;top:648px"><span class="n" style="left:2.3px;top:4px">4</span></div><div class="c v4" style="left:1020px;top:648px"><span class="n" style="left:2.3px;top:4px">4</span></div><div class="c v4" style="left:1071px;top:648px"><span class="n" style="left:2.3px;top:4px">4</span></div><div class="c v4" style="left:1122px;top:648px"><span class="n" style="left:2.3px;top:4px">4</span></div><div class="c v4" style="left:1173px;top:648px"><span class="n" style="left:2.3px;top:4px">4</span></div><div class="c v4" style="left:1224px;top:648px"><span class="n" style="left:2.3px;top:4px">4</span></div><div class="c v4" style="left:1275px;top:648px"><span class="n" style="left:2.3px;top:4px">4</span></div><div class="c v4" style="left:1326px;top:648px"><span class="n" style="left:2.3px;top:4px">4</span></div><div class="c v4" style="left:1377px;top:648px"><span class="n" style="left:2.3px;top:4px">4</span></div><div class="c v4" style="left:1428px;top:648px"><span class="n" style="left:2.3px;top:4px">4</span></div><div class="c v4" style="left:1479px;top:648px"><span class="n" style="left:2.3px;top:4px">4</span></div><div class="c v4" style="left:1530px;top:648px"><span class="n" style="left:2.3px;top:4px">4</span></div><div class="c v4" style="left:1581px;top:648px"><span class="n" style="left:2.3px;top:4px">4</span></div>
<div class="c v1" style="left:0px;top:720px"><span class="n" style="left:2.3px;top:4px">1</span></div><div class="c v2" style="left:51px;top:720px"><span class="n" style="left:2.3px;top:4px">2</span></div><div class="c v3" style="left:102px;top:720px"><span class="n" style="left:2.3px;top:4px">3</span></div><div class="c v4" style="left:153px;top:720px"><span class="n" style="left:2.3px;top:4px">4</span></div><div class="c v6" style="left:204px;top:720px"><span class="n" style="left:2.3px;top:4px">6</span></div><div class="c v6" style="left:255px;top:720px"><span class="n" style="left:2.3px;top:4px">6</span></div><div class="c v6" style="left:306px;top:720px"><span class="n" style="left:2.3px;top:4px">6</span></div><div class="c v6" style="left:357px;top:720px"><span class="n" style="left:2.3px;top:4px">6</span></div><div class="c v6" style="left:408px;top:720px"><span class="n" style="left:2.3px;top:4px">6</span></div><div class="c v6" style="left:459px;top:720px"><span class="n" style="left:2.3px;top:4px">6</span></div><div class="c v6" style="left:510px;top:720px"><span class="n" style="left:2.3px;top:4px">6</span></div><div class="c v6" style="left:561px;top:720px"><span class="n" style="left:2.3px;top:4px">6</span></div><div class="c v5" style="left:612px;top:720px"><span class="n" style="left:2.3px;top:4px">5</span></div><div class="c v5" style="left:663px;top:720px"><span class="n" style="left:2.3px;top:4px">5</span></div><div class="c v4" style="left:714px;top:720px"><span class="n" style="left:2.3px;top:4px">4</span></div><div class="c v4" style="left:765px;top:720px"><span class="n" style="left:2.3px;top:4px">4</span></div><div class="c v3" style="left:816px;top:720px"><span class="n" style="left:2.3px;top:4px">3</span></div><div class="c v3" style="left:867px;top:720px"><span class="n" style="left:2.3px;top:4px">3</span></div><div class="c v3" style="left:918px;top:720px"><span class="n" style="left:2.3px;top:4px">3</span></div><div class="c v3" style="left:969px;top:720px"><span class="n" style="left:2.3px;top:4px">3</span></div><div class="c v3" style="left:1020px;top:720px"><span class="n" style="left:2.3px;top:4px">3</span></div><div class="c v3" style="left:1071px;top:720px"><span class="n" style="left:2.3px;top:4px">3</span></div><div class="c v3" style="left:1122px;top:720px"><span class="n" style="left:2.3px;top:4px">3</span></div><div class="c v3" style="left:1173px;top:720px"><span class="n" style="left:2.3px;top:4px">3</span></div><div class="c v3" style="left:1224px;top:720px"><span class="n" style="left:2.3px;top:4px">3</span></div><div class="c v3" style="left:1275px;top:720px"><span class="n" style="left:2.3px;top:4px">3</span></div><div class="c v3" style="left:1326px;top:720px"><span class="n" style="left:2.3px;top:4px">3</span></div><div class="c v3" style="left:1377px;top:720px"><span class="n" style="left:2.3px;top:4px">3</span></div><div class="c v3" style="left:1428px;top:720px"><span class="n" style="left:2.3px;top:4px">3</span></div><div class="c v3" style="left:1479px;top:720px"><span class="n" style="left:2.3px;top:4px">3</span></div><div class="c v3" style="left:1530px;top:720px"><span class="n" style="left:2.3px;top:4px">3</span></div><div class="c v3" style="left:1581px;top:720px"><span class="n" style="left:2.3px;top:4px">3</span></div>
<div class="c v1" style="left:0px;top:792px"><span class="n" style="left:2.3px;top:4px">1</span></div><div class="c v2" style="left:51px;top:792px"><span class="n" style="left:2.3px;top:4px">2</span></div><div class="c v3" style="left:102px;top:792px"><span class="n" style="left:2.3px;top:4px">3</span></div><div class="c v3" style="left:153px;top:792px"><span class="n" style="left:2.3px;top:4px">3</span></div><div class="c v5" style="left:204px;top:792px"><span class="n" style="left:2.3px;top:4px">5</span></div><div class="c v5" style="left:255px;top:792px"><span class="n" style="left:2.3px;top:4px">5</span></div><div class="c v5" style="left:306px;top:792px"><span class="n" style="left:2.3px;top:4px">5</span></div><div class="c v5" style="left:357px;top:792px"><span class="n" style="left:2.3px;top:4px">5</span></div><div class="c v5" style="left:408px;top:792px"><span class="n" style="left:2.3px;top:4px">5</span></div><div class="c v5" style="left:459px;top:792px"><span class="n" style="left:2.3px;top:4px">5</span></div><div class="c v5" style="left:510px;top:792px"><span class="n" style="left:2.3px;top:4px">5</span></div><div class="c v5" style="left:561px;top:792px"><span class="n" style="left:2.3px;top:4px">5</span></div><div class="c v5" style="left:612px;top:792px"><span class="n" style="left:2.3px;top:4px">5</span></div><div class="c v4" style="left:663px;top:792px"><span class="n" style="left:2.3px;top:4px">4</span></div><div class="c v4" style="left:714px;top:792px"><span class="n" style="left:2.3px;top:4px">4</span></div><div class="c v3" style="left:765px;top:792px"><span class="n" style="left:2.3px;top:4px">3</span></div><div class="c v3" style="left:816px;top:792px"><span class="n" style="left:2.3px;top:4px">3</span></div><div class="c v3" style="left:867px;top:792px"><span class="n" style="left:2.3px;top:4px">3</span></div><div class="c v3" style="left:918px;top:792px"><span class="n" style="left:2.3px;top:4px">3</span></div><div class="c v3" style="left:969px;top:792px"><span class="n" style="left:2.3px;top:4px">3</span></div><div class="c v3" style="left:1020px;top:792px"><span class="n" style="left:2.3px;top:4px">3</span></div><div class="c v3" style="left:1071px;top:792px"><span class="n" style="left:2.3px;top:4px">3</span></div><div class="c v3" style="left:1122px;top:792px"><span class="n" style="left:2.3px;top:4px">3</span></div><div class="c v3" style="left:1173px;top:792px"><span class="n" style="left:2.3px;top:4px">3</span></div><div class="c v3" style="left:1224px;top:792px"><span class="n" style="left:2.3px;top:4px">3</span></div><div class="c v3" style="left:1275px;top:792px"><span class="n" style="left:2.3px;top:4px">3</span></div><div class="c v3" style="left:1326px;top:792px"><span class="n" style="left:2.3px;top:4px">3</span></div><div class="c v3" style="left:1377px;top:792px"><span class="n" style="left:2.3px;top:4px">3</span></div><div class="c v3" style="left:1428px;top:792px"><span class="n" style="left:2.3px;top:4px">3</span></div><div class="c v3" style="left:1479px;top:792px"><span class="n" style="left:2.3px;top:4px">3</span></div><div class="c v3" style="left:1530px;top:792px"><span class="n" style="left:2.3px;top:4px">3</span></div><div class="c v3" style="left:1581px;top:792px"><span class="n" style="left:2.3px;top:4px">3</span></div>
<div class="a" style="left:0;top:0;width:1632px;height:864px;background:repeating-linear-gradient(to right,#ececf0 0,#ececf0 1px,transparent 1px,transparent 51px),repeating-linear-gradient(to bottom,#ececf0 0,#ececf0 1px,transparent 1px,transparent 72px)"></div><div class="a" style="left:4px;top:796px;width:43px;height:64px;box-sizing:border-box;border:4px solid #008000;border-radius:1.5px"></div><div class="a v1" style="left:1px;top:793px;width:9px;height:18px"><span class="n" style="left:1px;top:4px">1</span></div><div class="a" style="left:0;top:0;width:1px;height:864px;background:#f0f0f0"></div><div class="a" style="left:1px;top:0;width:1631px;height:1px;background:#fff"></div></div><svg class="a" style="left:0;top:0" width="1677" height="902" viewBox="0 0 1677 902" font-family="Liberation Sans, sans-serif" font-size="9" fill="#000"><rect x="20" y="14" width="1.4" height="852"/><path d="M20.7 3L24.2 14.5H17.2Z"/><rect x="18" y="865" width="5" height="1.2"/><text x="5.6" y="863.6">0</text><rect x="18" y="793" width="5" height="1.2"/><text x="5.6" y="791.6">8</text><rect x="18" y="721" width="5" height="1.2"/><text x="5.6" y="719.6">16</text><rect x="18" y="649" width="5" height="1.2"/><text x="5.6" y="647.6">24</text><rect x="18" y="577" width="5" height="1.2"/><text x="5.6" y="575.6">32</text><rect x="18" y="505" width="5" height="1.2"/><text x="5.6" y="503.6">40</text><rect x="18" y="433" width="5" height="1.2"/><text x="5.6" y="431.6">48</text><rect x="18" y="361" width="5" height="1.2"/><text x="5.6" y="359.6">56</text><rect x="18" y="289" width="5" height="1.2"/><text x="5.6" y="287.6">64</text><rect x="18" y="217" width="5" height="1.2"/><text x="5.6" y="215.6">72</text><rect x="18" y="145" width="5" height="1.2"/><text x="5.6" y="143.6">80</text><rect x="18" y="73" width="5" height="1.2"/><text x="5.6" y="71.6">88</text><text x="6" y="17" font-size="13">ж</text><rect x="21" y="870.8" width="1650" height="1.3"/><path d="M1677 871.4L1666.5 868.2V874.6Z"/><rect x="24" y="869" width="1" height="5"/><text font-size="10" transform="translate(20.9 875.6) rotate(90)">600</text><rect x="75" y="869" width="1" height="5"/><text font-size="10" transform="translate(71.9 875.6) rotate(90)">700</text><rect x="126" y="869" width="1" height="5"/><text font-size="10" transform="translate(122.9 875.6) rotate(90)">800</text><rect x="177" y="869" width="1" height="5"/><text font-size="10" transform="translate(173.9 875.6) rotate(90)">900</text><rect x="228" y="869" width="1" height="5"/><text font-size="10" transform="translate(224.9 875.6) rotate(90)">1000</text><rect x="279" y="869" width="1" height="5"/><text font-size="10" transform="translate(275.9 875.6) rotate(90)">1100</text><rect x="330" y="869" width="1" height="5"/><text font-size="10" transform="translate(326.9 875.6) rotate(90)">1200</text><rect x="381" y="869" width="1" height="5"/><text font-size="10" transform="translate(377.9 875.6) rotate(90)">1300</text><rect x="432" y="869" width="1" height="5"/><text font-size="10" transform="translate(428.9 875.6) rotate(90)">1400</text><rect x="483" y="869" width="1" height="5"/><text font-size="10" transform="translate(479.9 875.6) rotate(90)">1500</text><rect x="534" y="869" width="1" height="5"/><text font-size="10" transform="translate(530.9 875.6) rotate(90)">1600</text><rect x="585" y="869" width="1" height="5"/><text font-size="10" transform="translate(581.9 875.6) rotate(90)">1700</text><rect x="636" y="869" width="1" height="5"/><text font-size="10" transform="translate(632.9 875.6) rotate(90)">1800</text><rect x="687" y="869" width="1" height="5"/><text font-size="10" transform="translate(683.9 875.6) rotate(90)">1900</text><rect x="738" y="869" width="1" height="5"/><text font-size="10" transform="translate(734.9 875.6) rotate(90)">2000</text><rect x="789" y="869" width="1" height="5"/><text font-size="10" transform="translate(785.9 875.6) rotate(90)">2100</text><rect x="840" y="869" width="1" height="5"/><text font-size="10" transform="translate(836.9 875.6) rotate(90)">2200</text><rect x="891" y="869" width="1" height="5"/><text font-size="10" transform="translate(887.9 875.6) rotate(90)">2300</text><rect x="942" y="869" width="1" height="5"/><text font-size="10" transform="translate(938.9 875.6) rotate(90)">2400</text><rect x="993" y="869" width="1" height="5"/><text font-size="10" transform="translate(989.9 875.6) rotate(90)">2500</text><rect x="1044" y="869" width="1" height="5"/><text font-size="10" transform="translate(1040.9 875.6) rotate(90)">2600</text><rect x="1095" y="869" width="1" height="5"/><text font-size="10" transform="translate(1091.9 875.6) rotate(90)">2700</text><rect x="1146" y="869" width="1" height="5"/><text font-size="10" transform="translate(1142.9 875.6) rotate(90)">2800</text><rect x="1197" y="869" width="1" height="5"/><text font-size="10" transform="translate(1193.9 875.6) rotate(90)">2900</text><rect x="1248" y="869" width="1" height="5"/><text font-size="10" transform="translate(1244.9 875.6) rotate(90)">3000</text><rect x="1299" y="869" width="1" height="5"/><text font-size="10" transform="translate(1295.9 875.6) rotate(90)">3100</text><rect x="1350" y="869" width="1" height="5"/><text font-size="10" transform="translate(1346.9 875.6) rotate(90)">3200</text><rect x="1401" y="869" width="1" height="5"/><text font-size="10" transform="translate(1397.9 875.6) rotate(90)">3300</text><rect x="1452" y="869" width="1" height="5"/><text font-size="10" transform="translate(1448.9 875.6) rotate(90)">3400</text><rect x="1503" y="869" width="1" height="5"/><text font-size="10" transform="translate(1499.9 875.6) rotate(90)">3500</text><rect x="1554" y="869" width="1" height="5"/><text font-size="10" transform="translate(1550.9 875.6) rotate(90)">3600</text><rect x="1605" y="869" width="1" height="5"/><text font-size="10" transform="translate(1601.9 875.6) rotate(90)">3700</text><text x="1649.6" y="889.8" font-size="9.4" letter-spacing=".5">RPM</text></svg></div>
<div id="status" class="a"><div class="a" style="left:0;top:0;width:1920px;height:1px;background:#d7d7d7"></div><span class="t " id="st0" style="left:1.60px;top:5px;letter-spacing:-1.400px;">????</span><div class="sep" style="left:49px;top:2px;height:17px;background:#d8d8d8"></div><span class="t " id="st1" style="left:54.00px;top:5px;letter-spacing:-0.125px;">57600</span><div class="sep" style="left:99px;top:2px;height:17px;background:#d8d8d8"></div><div class="sep" style="left:349px;top:2px;height:17px;background:#d8d8d8"></div><span class="t " id="err" style="left:352.60px;top:5px;letter-spacing:-0.135px;font-weight:bold;color:#f00;font-size:11.5px">Нет ответа от устройства</span></div>
</body></html>
